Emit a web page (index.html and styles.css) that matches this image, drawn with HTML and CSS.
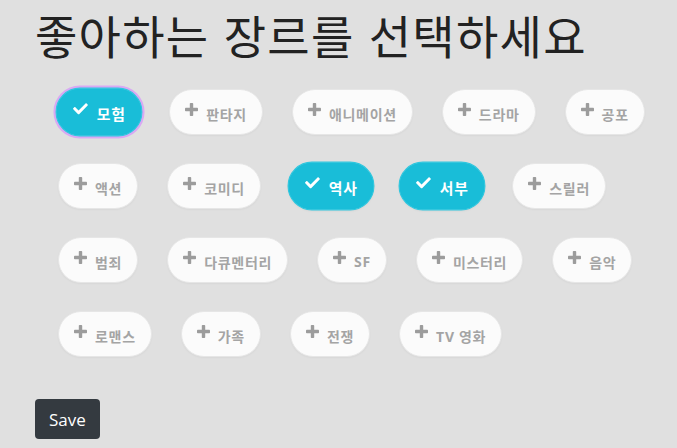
FILE: index.html
```html
<!DOCTYPE html>
<html lang="ko">
<head>
<meta charset="utf-8">
<title>장르 선택</title>
<link rel="stylesheet" href="styles.css">
</head>
<body>
<main class="page">
  <h1 class="title">좋아하는 장르를 선택하세요</h1>
  <ul class="genres">
    <li class="pill selected focused"><svg class="ico check" viewBox="0 0 512 512"><path d="M173.9 439.4l-166.4-166.4c-10-10-10-26.2 0-36.2l36.2-36.2c10-10 26.2-10 36.2 0L192 312.7 432.1 72.6c10-10 26.2-10 36.2 0l36.2 36.2c10 10 10 26.2 0 36.2l-294.4 294.4c-10 10-26.2 10-36.2 0z"/></svg><span class="label">모험</span></li>
    <li class="pill"><svg class="ico plus" viewBox="0 0 13 13"><rect x="4.8" y="0" width="3.4" height="13" rx="0.8"/><rect x="0" y="4.8" width="13" height="3.4" rx="0.8"/></svg><span class="label">판타지</span></li>
    <li class="pill"><svg class="ico plus" viewBox="0 0 13 13"><rect x="4.8" y="0" width="3.4" height="13" rx="0.8"/><rect x="0" y="4.8" width="13" height="3.4" rx="0.8"/></svg><span class="label">애니메이션</span></li>
    <li class="pill"><svg class="ico plus" viewBox="0 0 13 13"><rect x="4.8" y="0" width="3.4" height="13" rx="0.8"/><rect x="0" y="4.8" width="13" height="3.4" rx="0.8"/></svg><span class="label">드라마</span></li>
    <li class="pill"><svg class="ico plus" viewBox="0 0 13 13"><rect x="4.8" y="0" width="3.4" height="13" rx="0.8"/><rect x="0" y="4.8" width="13" height="3.4" rx="0.8"/></svg><span class="label">공포</span></li>
    <li class="pill"><svg class="ico plus" viewBox="0 0 13 13"><rect x="4.8" y="0" width="3.4" height="13" rx="0.8"/><rect x="0" y="4.8" width="13" height="3.4" rx="0.8"/></svg><span class="label">액션</span></li>
    <li class="pill"><svg class="ico plus" viewBox="0 0 13 13"><rect x="4.8" y="0" width="3.4" height="13" rx="0.8"/><rect x="0" y="4.8" width="13" height="3.4" rx="0.8"/></svg><span class="label">코미디</span></li>
    <li class="pill selected"><svg class="ico check" viewBox="0 0 512 512"><path d="M173.9 439.4l-166.4-166.4c-10-10-10-26.2 0-36.2l36.2-36.2c10-10 26.2-10 36.2 0L192 312.7 432.1 72.6c10-10 26.2-10 36.2 0l36.2 36.2c10 10 10 26.2 0 36.2l-294.4 294.4c-10 10-26.2 10-36.2 0z"/></svg><span class="label">역사</span></li>
    <li class="pill selected"><svg class="ico check" viewBox="0 0 512 512"><path d="M173.9 439.4l-166.4-166.4c-10-10-10-26.2 0-36.2l36.2-36.2c10-10 26.2-10 36.2 0L192 312.7 432.1 72.6c10-10 26.2-10 36.2 0l36.2 36.2c10 10 10 26.2 0 36.2l-294.4 294.4c-10 10-26.2 10-36.2 0z"/></svg><span class="label">서부</span></li>
    <li class="pill"><svg class="ico plus" viewBox="0 0 13 13"><rect x="4.8" y="0" width="3.4" height="13" rx="0.8"/><rect x="0" y="4.8" width="13" height="3.4" rx="0.8"/></svg><span class="label">스릴러</span></li>
    <li class="pill"><svg class="ico plus" viewBox="0 0 13 13"><rect x="4.8" y="0" width="3.4" height="13" rx="0.8"/><rect x="0" y="4.8" width="13" height="3.4" rx="0.8"/></svg><span class="label">범죄</span></li>
    <li class="pill"><svg class="ico plus" viewBox="0 0 13 13"><rect x="4.8" y="0" width="3.4" height="13" rx="0.8"/><rect x="0" y="4.8" width="13" height="3.4" rx="0.8"/></svg><span class="label">다큐멘터리</span></li>
    <li class="pill"><svg class="ico plus" viewBox="0 0 13 13"><rect x="4.8" y="0" width="3.4" height="13" rx="0.8"/><rect x="0" y="4.8" width="13" height="3.4" rx="0.8"/></svg><span class="label">SF</span></li>
    <li class="pill"><svg class="ico plus" viewBox="0 0 13 13"><rect x="4.8" y="0" width="3.4" height="13" rx="0.8"/><rect x="0" y="4.8" width="13" height="3.4" rx="0.8"/></svg><span class="label">미스터리</span></li>
    <li class="pill"><svg class="ico plus" viewBox="0 0 13 13"><rect x="4.8" y="0" width="3.4" height="13" rx="0.8"/><rect x="0" y="4.8" width="13" height="3.4" rx="0.8"/></svg><span class="label">음악</span></li>
    <li class="pill"><svg class="ico plus" viewBox="0 0 13 13"><rect x="4.8" y="0" width="3.4" height="13" rx="0.8"/><rect x="0" y="4.8" width="13" height="3.4" rx="0.8"/></svg><span class="label">로맨스</span></li>
    <li class="pill"><svg class="ico plus" viewBox="0 0 13 13"><rect x="4.8" y="0" width="3.4" height="13" rx="0.8"/><rect x="0" y="4.8" width="13" height="3.4" rx="0.8"/></svg><span class="label">가족</span></li>
    <li class="pill"><svg class="ico plus" viewBox="0 0 13 13"><rect x="4.8" y="0" width="3.4" height="13" rx="0.8"/><rect x="0" y="4.8" width="13" height="3.4" rx="0.8"/></svg><span class="label">전쟁</span></li>
    <li class="pill"><svg class="ico plus" viewBox="0 0 13 13"><rect x="4.8" y="0" width="3.4" height="13" rx="0.8"/><rect x="0" y="4.8" width="13" height="3.4" rx="0.8"/></svg><span class="label">TV 영화</span></li>
  </ul>
  <button class="save" type="button">Save</button>
</main>
</body>
</html>
```

FILE: styles.css
```css
html, body {
  margin: 0;
  padding: 0;
}
body {
  background: #e0e0e0;
  font-family: "Open Sans", "Noto Sans CJK KR", sans-serif;
  width: 677px;
  height: 448px;
  overflow: hidden;
}
.page {
  padding: 7px 0 0 35px;
}
.title {
  margin: 0;
  font-family: "Noto Sans CJK KR", sans-serif;
  font-weight: 400;
  font-size: 46px;
  line-height: 55px;
  letter-spacing: 1.3px;
  color: #222;
}
.genres {
  list-style: none;
  margin: 27px 0 0 0;
  padding: 0 10px 0 23px;
  display: flex;
  flex-wrap: wrap;
  column-gap: 29px;
  row-gap: 28px;
}
.pill {
  box-sizing: border-box;
  height: 46px;
  display: flex;
  align-items: center;
  gap: 8px;
  padding: 0 15px;
  border-radius: 23px;
  background: #fbfbfb;
  border: 1px solid #e6e6e6;
  box-shadow: 0 1px 2px rgba(0, 0, 0, 0.04);
  color: #a4a4a4;
  font-size: 14px;
  font-weight: 700;
}
.label {
  margin-top: 3px;
  letter-spacing: 0.7px;
  white-space: nowrap;
}
.ico {
  flex: none;
  margin-bottom: 6px;
}
.plus {
  width: 13px;
  height: 13px;
  fill: #9c9c9c;
}
.check {
  width: 15px;
  height: 14px;
  fill: #ffffff;
}
.selected {
  background: #19bdd8;
  border: 1px solid #30c7df;
  color: #ffffff;
  transform: scale(1.06);
}
.focused {
  box-shadow: 0 0 0 2px #d9a9f3;
}
.save {
  margin-top: 42px;
  box-sizing: border-box;
  height: 40px;
  padding: 0 14px;
  border: none;
  border-radius: 4px;
  background: #343a40;
  color: #ffffff;
  font-family: "Open Sans", sans-serif;
  font-size: 17px;
}
```
